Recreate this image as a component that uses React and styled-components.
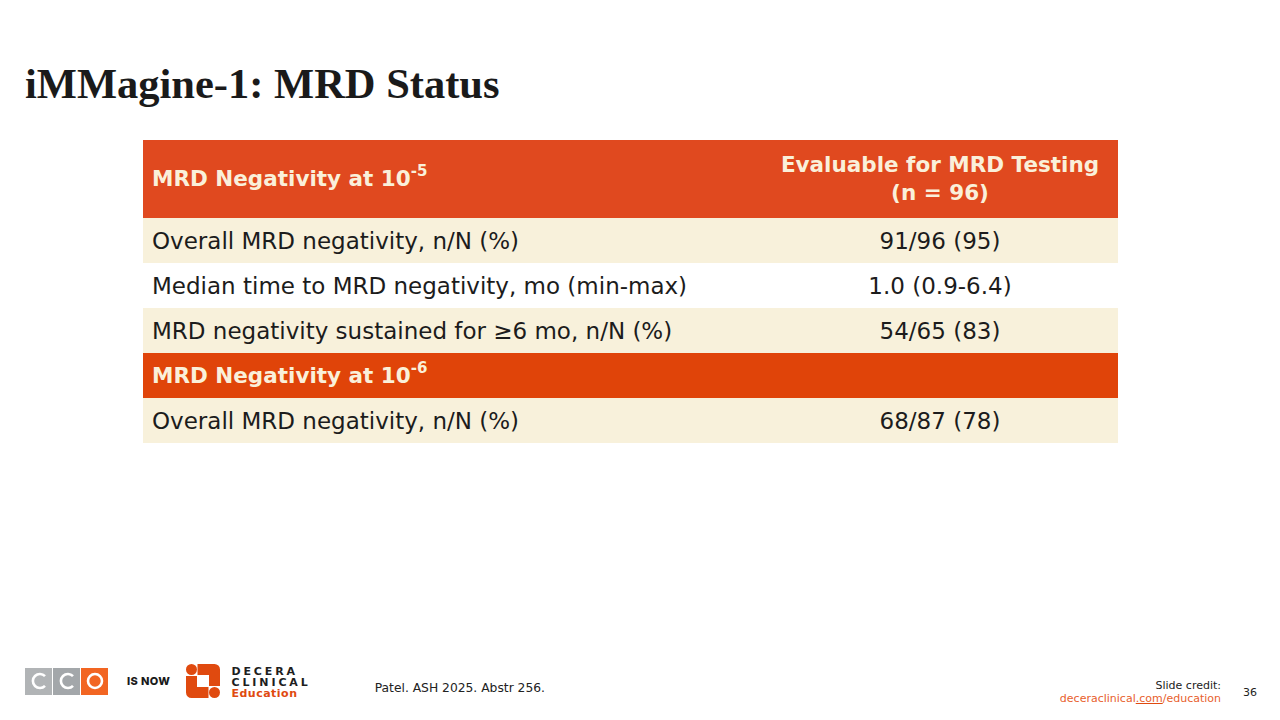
import React from "react";
import styled, { createGlobalStyle } from "styled-components";

const Global = createGlobalStyle`
  html, body { margin: 0; padding: 0; background: #fff; }
  body { font-family: "DejaVu Sans", sans-serif; }
`;

const Page = styled.div`
  width: 1280px;
  height: 720px;
  display: flex;
  flex-direction: column;
  overflow: hidden;
  box-sizing: border-box;
`;

const Title = styled.h1`
  margin: 58px 0 0 25px;
  font-family: "Liberation Serif", "Times New Roman", serif;
  font-weight: 700;
  font-size: 42.5px;
  line-height: 52px;
  color: #1a1a1a;
`;

const Table = styled.div`
  margin: 30px 0 0 143px;
  width: 975px;
  display: grid;
  grid-template-columns: 619px 356px;
`;

const Cell = styled.div`
  height: ${(p) => p.$h || 45}px;
  display: flex;
  align-items: center;
  justify-content: ${(p) => (p.$center ? "center" : "flex-start")};
  text-align: ${(p) => (p.$center ? "center" : "left")};
  padding: 0 9px;
  box-sizing: border-box;
  background: ${(p) => p.$bg};
  color: ${(p) => (p.$head ? "#FAF0DA" : "#1c1c1c")};
  font-family: "DejaVu Sans", sans-serif;
  font-weight: ${(p) => (p.$head ? 700 : 400)};
  font-size: ${(p) => (p.$head ? 21.5 : 23)}px;
  line-height: 28px;
`;

const Sup = styled.sup`
  font-size: 0.7em;
  line-height: 0;
  position: relative;
  top: -0.1em;
`;

const Footer = styled.div`
  margin-top: auto;
  height: 62px;
  display: flex;
  align-items: flex-start;
  padding: 0 23px 0 25px;
  box-sizing: border-box;
`;

const Brand = styled.div`
  display: flex;
  align-items: center;
  margin-top: 5px;
`;

const CcoLogo = styled.div`
  display: flex;
  gap: 1px;
`;

const CcoTile = styled.div`
  width: 27px;
  height: 27px;
  background: ${(p) => p.$bg};
  display: flex;
  align-items: center;
  justify-content: center;
`;

const IsNow = styled.span`
  margin-left: 19px;
  font-family: "Inter", "Liberation Sans", sans-serif;
  font-weight: 800;
  font-size: 11px;
  letter-spacing: 0.4px;
  color: #1a1a1a;
`;

const DeceraIcon = styled.div`
  margin-left: 16px;
  display: flex;
`;

const DeceraText = styled.div`
  margin-left: 11px;
  margin-top: 3px;
  display: flex;
  flex-direction: column;
  font-family: "DejaVu Sans", sans-serif;
  font-size: 11px;
  line-height: 11px;
`;

const DeceraWord = styled.span`
  font-weight: 700;
  letter-spacing: 2.9px;
  color: #1e1e1e;
`;

const EduWord = styled.span`
  font-weight: 700;
  letter-spacing: 0.5px;
  color: #E04A0F;
`;

const Citation = styled.span`
  margin-left: 64px;
  margin-top: 23px;
  font-family: "DejaVu Sans", sans-serif;
  font-size: 12.3px;
  color: #222;
`;

const Credit = styled.div`
  margin-left: auto;
  margin-top: 21px;
  display: flex;
  flex-direction: column;
  align-items: flex-end;
  font-family: "DejaVu Sans", sans-serif;
  font-size: 11px;
  line-height: 13px;
  color: #222;
`;

const CreditLink = styled.span`
  color: #E8602C;
  & u { text-decoration-color: #E04A0F; }
`;

const PageNum = styled.span`
  margin-left: 22px;
  margin-top: 28px;
  font-family: "DejaVu Sans", sans-serif;
  font-size: 11px;
  color: #222;
`;

const HEAD = "#E0491F";
const SECTION = "#E04409";
const BEIGE = "#F8F1DB";
const WHITE = "#FFFFFF";

const rows = [
  ["Overall MRD negativity, n/N (%)", "91/96 (95)", BEIGE],
  ["Median time to MRD negativity, mo (min-max)", "1.0 (0.9-6.4)", WHITE],
  ["MRD negativity sustained for \u22656 mo, n/N (%)", "54/65 (83)", BEIGE],
];

function Ring({ o }) {
  return (
    <svg width="18" height="18" viewBox="0 0 18 18">
      {o ? (
        <circle cx="9" cy="9" r="7" fill="none" stroke="#fff" strokeWidth="2.6" />
      ) : (
        <path d="M15 4.2 A7 7 0 1 0 15 13.8" fill="none" stroke="#fff" strokeWidth="2.6" />
      )}
    </svg>
  );
}

function Decera() {
  const c = "#E04A0F";
  return (
    <svg width="34" height="34" viewBox="0 0 34 34">
      <circle cx="5.5" cy="5.5" r="5.5" fill={c} />
      <path d="M11.5 0 H28.5 A5.5 5.5 0 0 1 34 5.5 V22 H23 V11 H11.5 Z" fill={c} />
      <path d="M0 12 H11 V23 H22.5 V34 H5.5 A5.5 5.5 0 0 1 0 28.5 Z" fill={c} />
      <circle cx="28.5" cy="28.5" r="5.5" fill={c} />
    </svg>
  );
}

export default function App() {
  return (
    <Page>
      <Global />
      <Title>iMMagine-1: MRD Status</Title>
      <Table>
        <Cell $head $bg={HEAD} $h={78}>
          <span>
            MRD Negativity at 10<Sup>-5</Sup>
          </span>
        </Cell>
        <Cell $head $center $bg={HEAD} $h={78}>
          Evaluable for MRD Testing
          <br />
          (n = 96)
        </Cell>
        {rows.map(([a, b, bg]) => (
          <React.Fragment key={a}>
            <Cell $bg={bg}>{a}</Cell>
            <Cell $bg={bg} $center>
              {b}
            </Cell>
          </React.Fragment>
        ))}
        <Cell $head $bg={SECTION}>
          <span>
            MRD Negativity at 10<Sup>-6</Sup>
          </span>
        </Cell>
        <Cell $head $bg={SECTION} />
        <Cell $bg={BEIGE}>Overall MRD negativity, n/N (%)</Cell>
        <Cell $bg={BEIGE} $center>
          68/87 (78)
        </Cell>
      </Table>
      <Footer>
        <Brand>
          <CcoLogo>
            <CcoTile $bg="#B1B4B6">
              <Ring />
            </CcoTile>
            <CcoTile $bg="#A3A7AA">
              <Ring />
            </CcoTile>
            <CcoTile $bg="#F26522">
              <Ring o />
            </CcoTile>
          </CcoLogo>
          <IsNow>IS NOW</IsNow>
          <DeceraIcon>
            <Decera />
          </DeceraIcon>
          <DeceraText>
            <DeceraWord>DECERA</DeceraWord>
            <DeceraWord>CLINICAL</DeceraWord>
            <EduWord>Education</EduWord>
          </DeceraText>
        </Brand>
        <Citation>Patel. ASH 2025. Abstr 256.</Citation>
        <Credit>
          <span>Slide credit:</span>
          <CreditLink>
            deceraclinical<u>.com</u>/education
          </CreditLink>
        </Credit>
        <PageNum>36</PageNum>
      </Footer>
    </Page>
  );
}
